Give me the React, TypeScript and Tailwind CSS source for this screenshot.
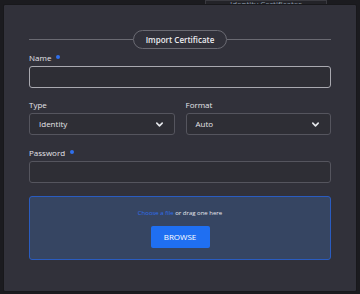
import React from 'react';

const Chevron = () => (
  <svg width="9" height="9" viewBox="0 0 10 10" fill="none">
    <path d="M2 3.5 L5 6.5 L8 3.5" stroke="#e5e7eb" strokeWidth="1.8" strokeLinecap="round" strokeLinejoin="round" />
  </svg>
);

const Label: React.FC<{ text: string; required?: boolean }> = ({ text, required }) => (
  <div className="flex items-center gap-[5px] text-[8px] font-medium text-[#e4e4e8] leading-none h-[10px] mb-[3px]">
    <span>{text}</span>
    {required && <span className="w-[4px] h-[4px] rounded-full bg-[#2f6fed] -mt-[3px]" />}
  </div>
);

const Select: React.FC<{ value: string }> = ({ value }) => (
  <div className="flex items-center justify-between h-[22px] pl-[9px] pr-[10px] rounded-[3px] border border-[#55555e] bg-[#2e2e35] text-[8px] font-medium text-[#e4e4e8]">
    <span>{value}</span>
    <Chevron />
  </div>
);

export default function App() {
  return (
    <div
      className="w-[360px] h-[294px] bg-[#1b1b1f] relative overflow-hidden"
      style={{ fontFamily: '"Open Sans", "Liberation Sans", sans-serif' }}
    >
      {/* page behind the modal */}
      <div className="absolute left-[205px] top-0 w-[122px] h-[5px] border border-[#3a3a40] bg-[#232328] flex justify-center overflow-hidden">
        <span className="text-[8px] text-[#8a9aa8] leading-none -mt-[1px]">Identity Certificates</span>
      </div>

      <div className="absolute left-[3px] top-[4px] w-[354px] h-[288px] bg-[#31313a] border border-[#18181b] rounded-[2px] px-[25px] pt-[25px]">
        <div className="flex items-center mb-[4px]">
          <div className="flex-1 h-px bg-[#6a6a72]" />
          <div className="h-[19px] px-[12px] rounded-full border border-[#6a6a72] flex items-center text-[8px] font-semibold text-[#ececf0]">
            Import Certificate
          </div>
          <div className="flex-1 h-px bg-[#6a6a72]" />
        </div>

        <Label text="Name" required />
        <div className="h-[22px] rounded-[3px] border-[1.5px] border-[#a9a9b0] bg-[#2e2e35] mb-[12px]" />

        <div className="grid grid-cols-2 gap-[11px] mb-[13px]">
          <div>
            <Label text="Type" />
            <Select value="Identity" />
          </div>
          <div>
            <Label text="Format" />
            <Select value="Auto" />
          </div>
        </div>

        <Label text="Password" required />
        <div className="h-[22px] rounded-[3px] border border-[#55555e] bg-[#2e2e35] mb-[13px]" />

        <div className="h-[64px] rounded-[3px] border border-[#2a5cc0] bg-[#364562] flex flex-col items-center pt-[13px]">
          <div className="text-[6px] font-medium leading-none">
            <span className="text-[#2f6fed]">Choose a file</span>{' '}
            <span className="text-[#e6e8ee]">or drag one here</span>
          </div>
          <button className="mt-[10px] w-[59px] h-[22px] rounded-[2px] bg-[#1f6ff2] text-[8px] font-medium text-white flex items-center justify-center">
            BROWSE
          </button>
        </div>
      </div>
    </div>
  );
}
